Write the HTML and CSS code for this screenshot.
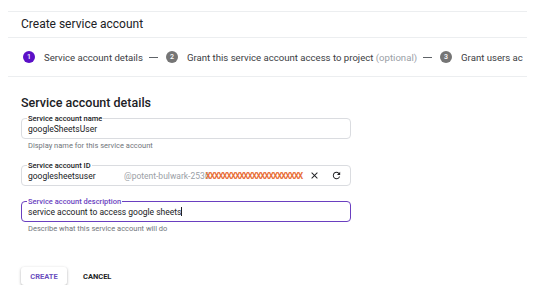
FILE: index.html
```html
<!DOCTYPE html>
<html lang="en">
<head>
    <meta charset="UTF-8">
    <meta name="viewport" content="width=device-width, initial-scale=1.0">
    <title>Create service account</title>
    <link rel="stylesheet" href="styles.css">
</head>
<body>
    <div class="panel">
        <div class="page-title">Create service account</div>
        <div class="stepper">
            <span class="step-num active">1</span>
            <span class="step-label">Service account details</span>
            <span class="step-dash"></span>
            <span class="step-num">2</span>
            <span class="step-label">Grant this service account access to project <span class="optional">(optional)</span></span>
            <span class="step-dash"></span>
            <span class="step-num">3</span>
            <span class="step-label">Grant users ac</span>
        </div>
        <div class="content">
            <h2>Service account details</h2>
            <fieldset class="field">
                <legend>Service account name</legend>
                <div class="field-row">
                    <span class="value">googleSheetsUser</span>
                </div>
            </fieldset>
            <div class="hint">Display name for this service account</div>

            <fieldset class="field field-id">
                <legend>Service account ID</legend>
                <div class="field-row">
                    <span class="value id-value">googlesheetsuser</span>
                    <span class="suffix">@potent-bulwark-2536<span class="redact">XXXXXXXXXXXXXXXXXXXXXXX</span></span>
                    <svg class="icon icon-clear" viewBox="0 0 24 24" width="11" height="11">
                        <path d="M19 6.41L17.59 5 12 10.59 6.41 5 5 6.41 10.59 12 5 17.59 6.41 19 12 13.41 17.59 19 19 17.59 13.41 12z" fill="#202124"/>
                    </svg>
                    <svg class="icon icon-refresh" viewBox="0 0 24 24" width="11" height="11">
                        <path d="M17.65 6.35A7.958 7.958 0 0 0 12 4c-4.42 0-7.99 3.58-7.99 8s3.57 8 7.99 8c3.73 0 6.84-2.55 7.73-6h-2.08A5.99 5.99 0 0 1 12 18c-3.31 0-6-2.69-6-6s2.69-6 6-6c1.66 0 3.14.69 4.22 1.78L13 11h7V4l-2.35 2.35z" fill="#202124"/>
                    </svg>
                </div>
            </fieldset>

            <fieldset class="field focused">
                <legend>Service account description</legend>
                <div class="field-row">
                    <span class="value">service account to access google sheets<span class="caret"></span></span>
                </div>
            </fieldset>
            <div class="hint">Describe what this service account will do</div>

            <div class="actions">
                <button type="button" class="btn-create">CREATE</button>
                <button type="button" class="btn-cancel">CANCEL</button>
            </div>
        </div>
    </div>
</body>
</html>
```

FILE: styles.css
```css
body {
    margin: 0;
    padding: 0;
    background-color: #fff;
    font-family: Roboto, "Liberation Sans", sans-serif;
    color: #202124;
}
.panel {
    width: 519px;
    margin: 11px 0 0 8px;
    border-top: 1px solid #eceef0;
}
.page-title {
    height: 25px;
    line-height: 25px;
    padding-left: 13px;
    font-size: 12px;
    color: #202124;
    border-bottom: 1px solid #eceef0;
}
.stepper {
    height: 38px;
    display: flex;
    align-items: center;
    padding-left: 15px;
    border-bottom: 1px solid #eceef0;
    white-space: nowrap;
    overflow: hidden;
    font-size: 9.6px;
    color: #3c4043;
}
.step-num {
    flex: none;
    width: 12px;
    height: 12px;
    border-radius: 50%;
    background-color: #757575;
    color: #fff;
    font-size: 7px;
    font-weight: 500;
    line-height: 12px;
    text-align: center;
    margin-right: 9px;
}
.step-num.active {
    background-color: #5b0fc7;
}
.step-dash {
    flex: none;
    width: 9px;
    height: 1px;
    background-color: #5f6368;
    margin: 0 8px 0 6px;
}
.optional {
    color: #9aa0a6;
}
.content {
    padding: 18px 0 0 13px;
}
h2 {
    font-size: 12.5px;
    font-weight: 500;
    margin: 0 0 4px;
    color: #202124;
}
.field {
    width: 316px;
    min-width: 0;
    margin: 0;
    padding: 0 6px 4px;
    border: 1px solid #dadce0;
    border-radius: 4px;
}
.field legend {
    font-size: 7.5px;
    font-weight: 500;
    color: #202124;
    padding: 0 1px;
    margin-left: -1px;
    line-height: 9px;
}
.field-row {
    display: flex;
    align-items: center;
    height: 11px;
}
.value {
    font-size: 8.5px;
    color: #202124;
}
.id-value {
    flex: none;
    width: 96px;
}
.suffix {
    font-size: 8.5px;
    color: #9aa0a6;
    flex: 1;
    min-width: 0;
    overflow: hidden;
    white-space: nowrap;
}
.redact {
    color: #e8703a;
    font-weight: 700;
    letter-spacing: -1.2px;
    margin-left: -4px;
}
.icon {
    flex: none;
}
.icon-clear {
    margin-left: 4px;
}
.icon-refresh {
    margin: 0 2px 0 11px;
}
.hint {
    font-size: 7.5px;
    color: #70757a;
    margin: 2px 0 0 7px;
}
.field-id {
    margin-top: 11px;
    margin-bottom: 11px;
}
.field.focused {
    border: 1.5px solid #6a3fc0;
}
.field.focused legend {
    color: #6a3fc0;
}
.caret {
    display: inline-block;
    width: 1px;
    height: 9px;
    background-color: #202124;
    vertical-align: -1px;
}
.actions {
    display: flex;
    align-items: center;
    margin-top: 34px;
}
.btn-create {
    font-family: Roboto, "Liberation Sans", sans-serif;
    font-size: 7.5px;
    font-weight: 700;
    color: #6a4fbe;
    background-color: #fff;
    border: none;
    border-radius: 3px;
    width: 46px;
    height: 18px;
    padding: 0;
    box-shadow: 0 1px 3px rgba(60, 64, 67, 0.3), 0 1px 2px rgba(60, 64, 67, 0.15);
    cursor: pointer;
}
.btn-cancel {
    font-family: Roboto, "Liberation Sans", sans-serif;
    font-size: 7.5px;
    font-weight: 700;
    color: #202124;
    background: none;
    border: none;
    padding: 0;
    margin-left: 16px;
    cursor: pointer;
}
```
